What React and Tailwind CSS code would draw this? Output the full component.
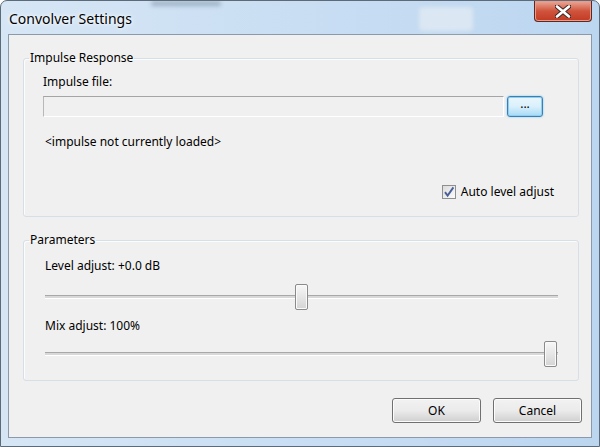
import React from "react";

const Slider = ({ value }) => (
  <div className="relative h-[26px] w-[513px]">
    <div className="absolute left-0 right-0 top-[11px] h-[4px] border-t border-b border-t-[#a8a8a8] border-b-white bg-[#d8d8d8]" />
    <div
      className="absolute top-0 h-[26px] w-[13px] rounded-[2px] border border-[#8a8a8a] bg-gradient-to-b from-[#f7f7f7] via-[#e6e6e6] to-[#d4d4d4] shadow-[inset_0_0_0_1px_#fafafa]"
      style={{ left: `${value * 500}px` }}
    />
  </div>
);

const GroupBox = ({ title, className, bodyClass, children }) => (
  <fieldset
    className={`rounded-[3px] border border-[#d5dfe5] px-0 shadow-[inset_1px_1px_0_#fbfcfd] ${className}`}
  >
    <legend className="ml-[5px] px-[1px] text-[12px] leading-[16px] text-black">
      {title}
    </legend>
    <div className={bodyClass}>{children}</div>
  </fieldset>
);

const Button = ({ label }) => (
  <button className="flex h-[25px] w-[89px] items-center justify-center rounded-[3px] border border-[#707070] bg-gradient-to-b from-[#f2f2f2] via-[#ebebeb] to-[#cfcfcf] text-[12px] text-black shadow-[inset_0_0_0_1px_#fcfcfc]">
    {label}
  </button>
);

export default function App() {
  return (
    <div className="relative flex h-[447px] w-[600px] flex-col overflow-hidden rounded-t-[7px] border border-[#5d6a78] bg-gradient-to-r from-[#d6e6f5] via-[#c9def3] to-[#bcd6f0] font-['Noto_Sans',sans-serif]">
      {/* blurred glass background hints */}
      <div className="absolute left-[418px] top-[6px] h-[24px] w-[54px] rounded-[4px] bg-[#dbe7f2] blur-[2px]" />
      <div className="absolute left-[150px] top-[0px] h-[5px] w-[70px] rounded-full bg-[#9fb3c6] blur-[2px]" />

      {/* title bar */}
      <div className="relative flex h-[33px] shrink-0 items-start">
        <div className="pl-[8px] pt-[8px] text-[14px] leading-[19px] text-black [text-shadow:0_0_6px_#ffffff,0_0_3px_#ffffff]">
          Convolver Settings
        </div>
        <div className="ml-auto mr-[7px] flex h-[21px] w-[58px] items-center justify-center rounded-b-[4px] border border-t-0 border-[#5a2a22] bg-gradient-to-b from-[#e9a898] via-[#d0533c] to-[#c23a22] shadow-[inset_0_0_0_1px_#ec9a8a]">
          <svg width="16" height="13" viewBox="0 0 16 13">
            <path
              d="M2 1.5 L8 6.5 L14 1.5 M2 11.5 L8 6.5 L14 11.5"
              fill="none"
              stroke="#3b2a28"
              strokeWidth="4.6"
              strokeLinecap="round"
            />
            <path
              d="M2 1.5 L8 6.5 L14 1.5 M2 11.5 L8 6.5 L14 11.5"
              fill="none"
              stroke="#ffffff"
              strokeWidth="2.6"
              strokeLinecap="round"
            />
          </svg>
        </div>
      </div>

      {/* client area */}
      <div className="mb-[8px] ml-[7px] mr-[7px] flex flex-1 flex-col border border-[#8a9aab] bg-[#f0f0f0] text-[12px] leading-[16px] text-black">
        <GroupBox
          title="Impulse Response"
          className="ml-[14px] mr-[12px] mt-[15px] pb-[16px]"
          bodyClass="pl-[19px] pr-[24px]"
        >
          <div className="mt-[8px]">Impulse file:</div>
          <div className="mt-[6px] flex items-center gap-[3px]">
            <div className="h-[21px] w-[461px] border border-t-[#a5a5a5] border-l-[#b8b8b8] border-r-white border-b-white bg-[#f0f0f0]" />
            <button className="flex h-[21px] w-[36px] items-center justify-center rounded-[3px] border border-[#3c7fb1] bg-gradient-to-b from-[#eaf6fd] via-[#d9f0fc] to-[#a7d9f5] pb-[5px] text-[12px] leading-[12px] text-black shadow-[0_0_2px_#6ec4f0,inset_0_0_0_1px_#8fd0f2]">
              ...
            </button>
          </div>
          <div className="ml-[2px] mt-[17px]">&lt;impulse not currently loaded&gt;</div>
          <div className="mt-[34px] flex items-center justify-end gap-[5px]">
            <div className="flex h-[14px] w-[14px] items-center justify-center border border-[#8f8f8f] bg-gradient-to-br from-[#dcdcdc] to-[#fbfbfb]">
              <svg width="12" height="12" viewBox="0 0 12 12">
                <path d="M2 6.2 L4.6 9.6 L10.4 1.4" fill="none" stroke="#4a5f97" strokeWidth="1.9" />
              </svg>
            </div>
            <span className="text-[12px]">Auto level adjust</span>
          </div>
        </GroupBox>

        <GroupBox
          title="Parameters"
          className="ml-[14px] mr-[12px] mt-[15px] pb-[13px]"
          bodyClass="pl-[21px] pr-[20px]"
        >
          <div className="mt-[10px]">Level adjust: +0.0 dB</div>
          <div className="mt-[10px]">
            <Slider value={0.5} />
          </div>
          <div className="mt-[8px]">Mix adjust: 100%</div>
          <div className="mt-[7px]">
            <Slider value={0.998} />
          </div>
        </GroupBox>

        <div className="mr-[9px] mt-[17px] flex justify-end gap-[12px]">
          <Button label="OK" />
          <Button label="Cancel" />
        </div>
      </div>
    </div>
  );
}
